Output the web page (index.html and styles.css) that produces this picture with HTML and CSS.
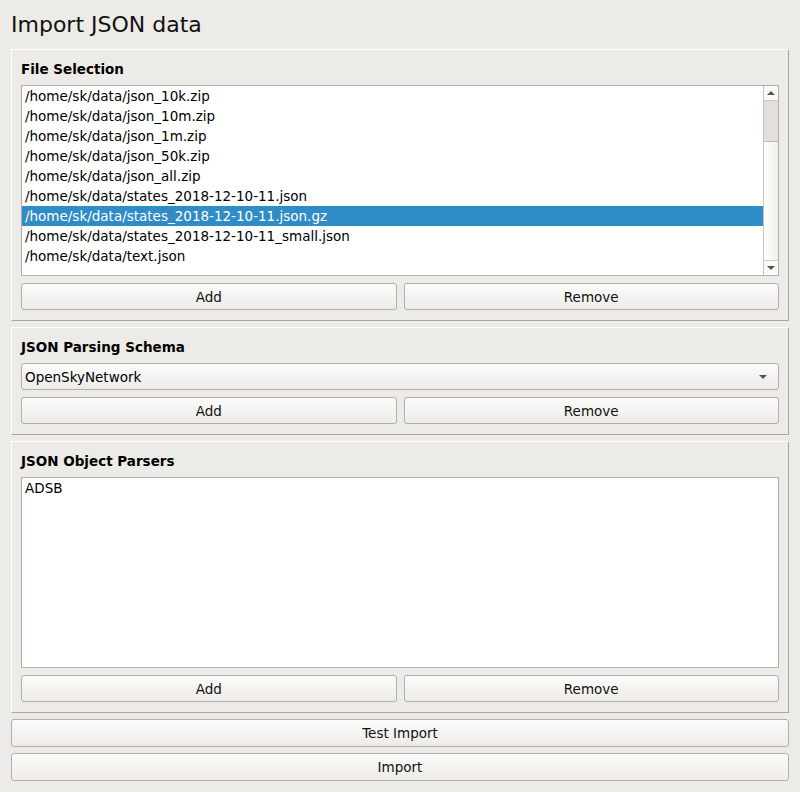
FILE: index.html
```html
<!DOCTYPE html>
<html>
<head>
<meta charset="utf-8">
<link rel="stylesheet" href="styles.css">
</head>
<body>
<div class="page">
  <h1 class="title">Import JSON data</h1>

  <section class="group group-files">
    <h2 class="group-title">File Selection</h2>
    <div class="listbox listbox-files">
      <ul class="items">
        <li>/home/sk/data/json_10k.zip</li>
        <li>/home/sk/data/json_10m.zip</li>
        <li>/home/sk/data/json_1m.zip</li>
        <li>/home/sk/data/json_50k.zip</li>
        <li>/home/sk/data/json_all.zip</li>
        <li>/home/sk/data/states_2018-12-10-11.json</li>
        <li class="selected">/home/sk/data/states_2018-12-10-11.json.gz</li>
        <li>/home/sk/data/states_2018-12-10-11_small.json</li>
        <li>/home/sk/data/text.json</li>
      </ul>
      <div class="scrollbar">
        <div class="sb-btn"><span class="arrow-up"></span></div>
        <div class="sb-track">
          <div class="sb-handle"></div>
        </div>
        <div class="sb-btn sb-btn-down"><span class="arrow-down"></span></div>
      </div>
    </div>
    <div class="btn-row">
      <button class="btn">Add</button>
      <button class="btn">Remove</button>
    </div>
  </section>

  <section class="group group-schema">
    <h2 class="group-title">JSON Parsing Schema</h2>
    <div class="combo">
      <span>OpenSkyNetwork</span>
      <span class="arrow-down combo-arrow"></span>
    </div>
    <div class="btn-row">
      <button class="btn">Add</button>
      <button class="btn">Remove</button>
    </div>
  </section>

  <section class="group group-parsers">
    <h2 class="group-title">JSON Object Parsers</h2>
    <div class="listbox listbox-parsers">
      <ul class="items">
        <li>ADSB</li>
      </ul>
    </div>
    <div class="btn-row">
      <button class="btn">Add</button>
      <button class="btn">Remove</button>
    </div>
  </section>

  <button class="btn btn-wide">Test Import</button>
  <button class="btn btn-wide">Import</button>
</div>
</body>
</html>
```

FILE: styles.css
```css
html, body {
  margin: 0;
  padding: 0;
  background: #edebe7;
}
body {
  font-family: "DejaVu Sans", "Liberation Sans", sans-serif;
  font-size: 13.5px;
  color: #000;
}
.page {
  width: 800px;
  height: 792px;
  box-sizing: border-box;
  padding: 0 11px 0 11px;
  display: flex;
  flex-direction: column;
}
.title {
  margin: 0;
  font-weight: normal;
  font-size: 22px;
  line-height: 26px;
  height: 26px;
  padding-top: 12px;
  margin-bottom: 11px;
  color: #111;
}
.group {
  border-top: 1px solid #ffffff;
  border-left: 1px solid #ffffff;
  border-right: 1px solid #aaa7a3;
  border-bottom: 1px solid #aaa7a3;
  padding: 0 9px 9px 9px;
  margin-bottom: 6px;
  display: flex;
  flex-direction: column;
  box-sizing: border-box;
}
.group-title {
  margin: 0;
  font-size: 13.5px;
  font-weight: bold;
  line-height: 16px;
  padding-top: 11px;
  height: 16px;
  margin-bottom: 8px;
}
.listbox {
  background: #fff;
  border: 1px solid #b2afab;
  display: flex;
  margin-bottom: 7px;
}
.listbox-files {
  height: 189px;
}
.listbox-parsers {
  height: 189px;
}
.items {
  list-style: none;
  margin: 0;
  padding: 0;
  flex: 1;
}
.items li {
  height: 20px;
  line-height: 20px;
  padding-left: 3px;
  white-space: nowrap;
}
.items li.selected {
  background: #308cc6;
  color: #fff;
}
.scrollbar {
  width: 14px;
  border-left: 1px solid #c8c5c1;
  display: flex;
  flex-direction: column;
  background: #fff;
}
.sb-btn {
  height: 14px;
  display: flex;
  align-items: center;
  justify-content: center;
  background: #fafaf9;
}
.sb-btn-down {
  border-top: 1px solid #cfccc8;
}
.sb-track {
  flex: 1;
  background: linear-gradient(to right, #ffffff, #efedea);
  border-top: 1px solid #cfccc8;
}
.sb-handle {
  height: 40px;
  background: #e1e0dd;
  border-bottom: 1px solid #bcb9b5;
}
.arrow-up {
  width: 0;
  height: 0;
  border-left: 4px solid transparent;
  border-right: 4px solid transparent;
  border-bottom: 4px solid #555;
}
.arrow-down {
  width: 0;
  height: 0;
  border-left: 4px solid transparent;
  border-right: 4px solid transparent;
  border-top: 4px solid #555;
}
.btn-row {
  display: flex;
  gap: 7px;
}
.btn {
  font-family: inherit;
  font-size: 13.5px;
  color: #111;
  height: 27px;
  border: 1px solid #b2afab;
  border-radius: 3px;
  background: linear-gradient(to bottom, #fbfbfa, #eeece9);
  padding: 0;
  margin: 0;
  flex: 1;
  box-sizing: border-box;
}
.combo {
  height: 27px;
  box-sizing: border-box;
  border: 1px solid #b2afab;
  border-radius: 3px;
  background: linear-gradient(to bottom, #fbfbfa, #eeece9);
  display: flex;
  align-items: center;
  justify-content: space-between;
  padding: 0 11px 0 3px;
  margin-bottom: 7px;
}
.btn-wide {
  flex: none;
  width: 100%;
  height: 28px;
  margin-bottom: 6px;
}
.group-files { height: 272px; }
.group-schema { height: 108px; }
.group-parsers { height: 272px; }
```
